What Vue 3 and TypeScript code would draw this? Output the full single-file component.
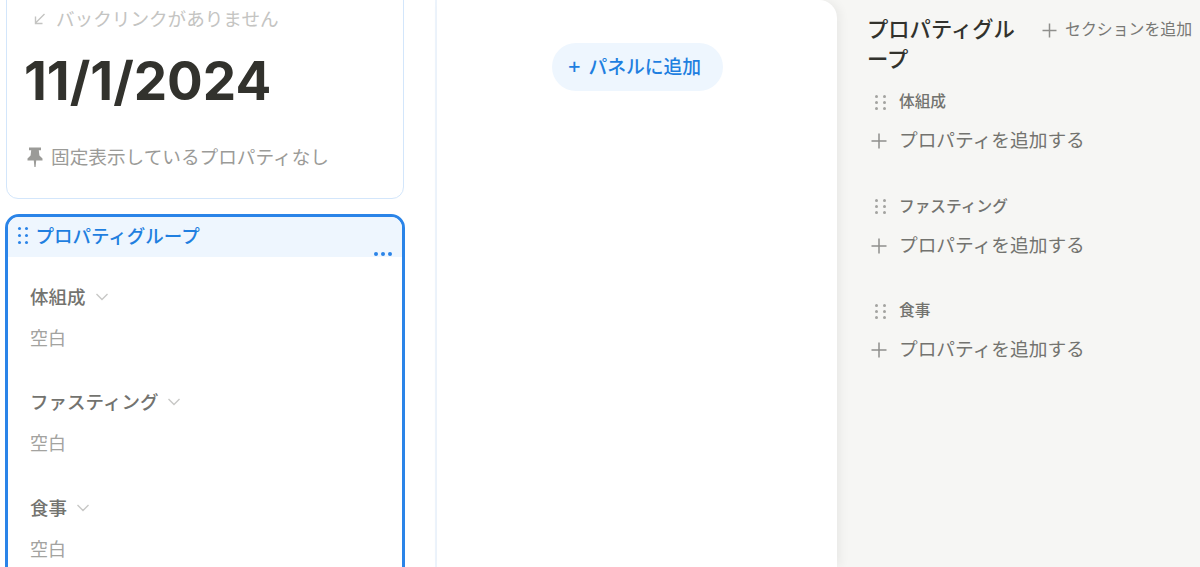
<script setup lang="ts">
const groups = ['体組成', 'ファスティング', '食事']
const dots = [0, 1, 2, 3, 4, 5]
</script>

<template>
  <div class="page">
    <section class="left">
      <div class="card-top">
        <div class="backlink">
          <svg width="16" height="16" viewBox="0 0 16 16" fill="none" stroke="#c4c4c2" stroke-width="1.4">
            <path d="M12.5 3 L3.5 12 M3.5 5.5 V12.5 H10.5" />
          </svg>
          <span>バックリンクがありません</span>
        </div>
        <h1 class="date">11/1/2024</h1>
        <div class="pinned">
          <svg width="16" height="20" viewBox="0 0 16 20" fill="#9b9b98">
            <path d="M2 0.5 H14 V3.2 H11.8 L12.4 8.6 L15.5 11.4 V13.4 H9.2 L8.6 20 H7.4 L6.8 13.4 H0.5 V11.4 L3.6 8.6 L4.2 3.2 H2 Z" />
          </svg>
          <span>固定表示しているプロパティなし</span>
        </div>
      </div>
      <div class="card-sel">
        <div class="sel-head">
          <span class="grip blue"><i v-for="d in dots" :key="d"></i></span>
          <span class="sel-title">プロパティグループ</span>
          <span class="more"><i></i><i></i><i></i></span>
        </div>
        <div class="sel-body">
          <div v-for="g in groups" :key="g" class="prop">
            <div class="prop-name">
              <span>{{ g }}</span>
              <svg width="14" height="10" viewBox="0 0 14 10" fill="none" stroke="#c8c8c6" stroke-width="1.4">
                <path d="M1.5 2 L7 7.5 L12.5 2" />
              </svg>
            </div>
            <div class="prop-val">空白</div>
          </div>
        </div>
      </div>
    </section>
    <section class="middle">
      <button class="add-panel"><span class="plus">+</span><span>パネルに追加</span></button>
    </section>
    <aside class="right">
      <div class="right-head">
        <h2>プロパティグループ</h2>
        <div class="add-section">
          <svg width="15" height="15" viewBox="0 0 15 15" stroke="#8f8f8c" stroke-width="1.5">
            <path d="M7.5 0.5 V14.5 M0.5 7.5 H14.5" />
          </svg>
          <span>セクションを追加</span>
        </div>
      </div>
      <div v-for="g in groups" :key="g" class="group">
        <div class="group-name">
          <span class="grip grey"><i v-for="d in dots" :key="d"></i></span>
          <span>{{ g }}</span>
        </div>
        <div class="add-prop">
          <svg width="16" height="16" viewBox="0 0 16 16" stroke="#8f8f8c" stroke-width="1.5">
            <path d="M8 0.5 V15.5 M0.5 8 H15.5" />
          </svg>
          <span>プロパティを追加する</span>
        </div>
      </div>
    </aside>
  </div>
</template>

<style>
html, body { margin: 0; background: #fff; }
</style>

<style scoped>
.page {
  display: flex;
  width: 1200px;
  height: 567px;
  overflow: hidden;
  font-family: "Inter", "Noto Sans CJK JP", sans-serif;
  background: #f6f6f4;
}
.left {
  width: 437px;
  flex: none;
  box-sizing: border-box;
  padding-left: 5px;
  background: #fff;
  border-right: 2px solid #edf4fc;
}
.card-top {
  box-sizing: border-box;
  width: 398px;
  height: 219px;
  margin: -20px 0 0 1px;
  padding: 28px 0 0 18px;
  border: 1px solid #d3e6fb;
  border-radius: 12px;
}
.backlink {
  display: flex;
  align-items: center;
  gap: 8px;
  height: 20px;
  margin-left: 7px;
  font-size: 18.6px;
  line-height: 20px;
  color: #c4c4c2;
}
.date {
  margin: 19px 0 0 -1px;
  font-size: 53px;
  line-height: 66px;
  font-weight: 700;
  color: #32322d;
}
.pinned {
  display: flex;
  align-items: center;
  gap: 8px;
  margin-top: 31px;
  margin-left: 2px;
  font-size: 18.65px;
  line-height: 24px;
  color: #9b9b98;
}
.card-sel {
  box-sizing: border-box;
  width: 400px;
  height: 420px;
  margin-top: 15px;
  border: 3px solid #2a84e8;
  border-radius: 14px;
  overflow: hidden;
}
.sel-head {
  position: relative;
  display: flex;
  align-items: center;
  gap: 7px;
  height: 40px;
  padding: 0 0 3px 10px;
  box-sizing: border-box;
  background: #eef6fe;
}
.sel-title {
  font-size: 18.5px;
  line-height: 24px;
  font-weight: 500;
  color: #1f7fe0;
}
.more {
  position: absolute;
  right: 10px;
  top: 35px;
  display: flex;
  gap: 3px;
}
.more i {
  width: 4px;
  height: 4px;
  border-radius: 50%;
  background: #2a84e8;
}
.grip {
  display: grid;
  grid-template-columns: 3px 3px;
  gap: 3px 5px;
  flex: none;
}
.grip i { width: 3px; height: 3px; border-radius: 50%; }
.grip.blue i { width: 3.4px; height: 3.4px; background: #2a84e8; }
.grip.blue { grid-template-columns: 3.4px 3.4px; gap: 3.4px 3.6px; }
.grip.grey i { background: #a3a3a0; }
.sel-body { padding: 28px 0 0 22px; }
.prop { height: 105.4px; }
.prop-name {
  display: flex;
  align-items: center;
  gap: 9px;
  font-size: 18.5px;
  line-height: 24px;
  font-weight: 500;
  color: #73736f;
}
.prop-val {
  margin-top: 18px;
  font-size: 18px;
  line-height: 24px;
  color: #a3a3a0;
}
.middle {
  position: relative;
  z-index: 1;
  width: 400px;
  flex: none;
  display: flex;
  justify-content: center;
  align-items: flex-start;
  padding-top: 43px;
  box-sizing: border-box;
  background: #fff;
  border-top-right-radius: 18px;
  box-shadow: 4px 0 10px rgba(0, 0, 0, 0.05);
}
.add-panel {
  display: flex;
  align-items: center;
  justify-content: center;
  gap: 7px;
  width: 171px;
  height: 48px;
  margin-left: 1px;
  padding: 0 7px 4px 0;
  border: 0;
  border-radius: 24px;
  background: #eef6fe;
  font: inherit;
  font-size: 18.8px;
  font-weight: 500;
  color: #1f7fe0;
}
.plus {
  font-size: 22px;
  font-weight: 400;
  line-height: 24px;
}
.right {
  flex: 1;
  min-width: 0;
  padding: 14px 0 0 31px;
}
.right-head {
  display: flex;
  align-items: flex-start;
  gap: 26px;
}
h2 {
  width: 148px;
  flex: none;
  margin: 0 0 0 -1px;
  font-size: 21.3px;
  line-height: 30px;
  font-weight: 500;
  color: #32322d;
}
.add-section {
  display: flex;
  align-items: center;
  gap: 8px;
  margin-top: 5px;
  margin-left: 1px;
  font-size: 15.9px;
  line-height: 22px;
  white-space: nowrap;
  color: #787875;
}
.group { height: 104.5px; margin-top: 0; }
.right-head + .group { margin-top: 16px; }
.group-name {
  display: flex;
  align-items: center;
  gap: 13px;
  padding-left: 7px;
  font-size: 15.7px;
  line-height: 24px;
  font-weight: 500;
  color: #73736f;
}
.add-prop {
  display: flex;
  align-items: center;
  gap: 12px;
  margin-top: 14px;
  padding-left: 3px;
  font-size: 18.7px;
  line-height: 26px;
  color: #73736f;
}
</style>
